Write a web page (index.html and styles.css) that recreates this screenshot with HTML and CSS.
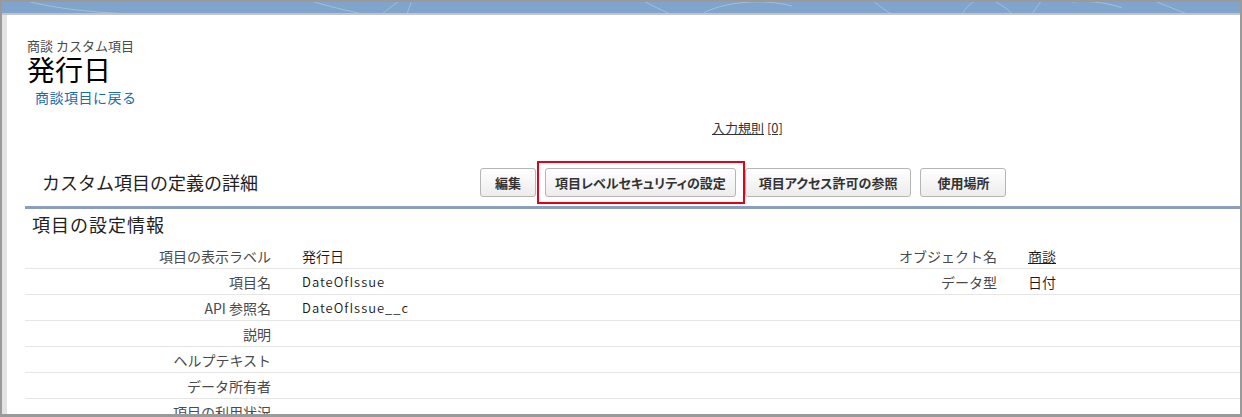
FILE: index.html
```html
<!DOCTYPE html>
<html lang="ja">

<head>
    <meta charset="UTF-8">
    <title>発行日 | 商談 カスタム項目</title>
    <link rel="stylesheet" href="styles.css">
</head>

<body>
    <div class="frame">
        <div class="banner">
            <svg class="banner-art" width="1238" height="11" viewBox="0 0 1238 11">
                <g fill="none" stroke="#ffffff" stroke-opacity="0.28" stroke-width="1">
                    <path d="M20 -2 C60 8 90 10 130 12" />
                    <path d="M300 -4 C330 6 345 8 360 12" />
                    <path d="M380 12 C390 4 395 0 400 -2" />
                    <path d="M405 12 L410 -2" />
                    <path d="M640 -2 C650 4 660 8 668 12" />
                    <path d="M700 12 C720 0 760 -4 790 4" />
                    <path d="M870 -2 C880 6 885 10 890 12" />
                    <path d="M960 12 C965 4 970 0 975 -2" />
                    <path d="M990 -2 C998 2 1005 6 1010 12" />
                    <path d="M1030 12 L1040 -2" />
                    <path d="M1070 0 C1090 -2 1110 2 1120 6" />
                    <path d="M1150 -2 C1165 4 1175 8 1185 12" />
                </g>
            </svg>
        </div>

        <div class="page">
            <div class="pt-header">
                <div class="pt-type">商談 カスタム項目</div>
                <h1 class="pt-title">発行日</h1>
                <a class="back-link" href="#">商談項目に戻る</a>
            </div>

            <div class="related-links">
                <a href="#">入力規則</a> <a href="#">[0]</a>
            </div>

            <div class="pb-header">
                <h2 class="pb-title">カスタム項目の定義の詳細</h2>
                <div class="pb-buttons">
                    <button class="btn btn-short">編集</button>
                    <span class="highlight">
                        <button class="btn">項目レベルセキュリティの設定</button>
                    </span>
                    <button class="btn btn-wide">項目アクセス許可の参照</button>
                    <button class="btn btn-short">使用場所</button>
                </div>
            </div>

            <h3 class="pb-sub">項目の設定情報</h3>

            <div class="detail-list">
                <div class="row">
                    <div class="label">項目の表示ラベル</div>
                    <div class="data">発行日</div>
                    <div class="label">オブジェクト名</div>
                    <div class="data"><a href="#">商談</a></div>
                </div>
                <div class="row">
                    <div class="label">項目名</div>
                    <div class="data latin">DateOfIssue</div>
                    <div class="label">データ型</div>
                    <div class="data">日付</div>
                </div>
                <div class="row">
                    <div class="label">API 参照名</div>
                    <div class="data latin">DateOfIssue__c</div>
                    <div class="label"></div>
                    <div class="data"></div>
                </div>
                <div class="row">
                    <div class="label">説明</div>
                    <div class="data"></div>
                    <div class="label"></div>
                    <div class="data"></div>
                </div>
                <div class="row">
                    <div class="label">ヘルプテキスト</div>
                    <div class="data"></div>
                    <div class="label"></div>
                    <div class="data"></div>
                </div>
                <div class="row">
                    <div class="label">データ所有者</div>
                    <div class="data"></div>
                    <div class="label"></div>
                    <div class="data"></div>
                </div>
                <div class="row">
                    <div class="label">項目の利用状況</div>
                    <div class="data"></div>
                    <div class="label"></div>
                    <div class="data"></div>
                </div>
            </div>
        </div>
    </div>
</body>

</html>
```

FILE: styles.css
```css
* {
    margin: 0;
    padding: 0;
    box-sizing: border-box;
}

body {
    width: 1242px;
    height: 417px;
    overflow: hidden;
    background: #ffffff;
    font-family: "Noto Sans CJK JP", "Noto Sans", sans-serif;
    color: #333333;
}

.frame {
    width: 1242px;
    height: 417px;
    border: 2px solid #9a9a9a;
    border-bottom-width: 3px;
    display: flex;
    flex-direction: column;
    overflow: hidden;
}

.banner {
    height: 13px;
    background-color: #80a4cc;
    border-bottom: 2px solid #c4c4c4;
    overflow: hidden;
}

.banner-art {
    display: block;
}

.page {
    flex: 1;
    border-left: 5px solid #e3e3e3;
    padding-left: 18px;
    overflow: hidden;
}

/* page title */
.pt-header {
    padding: 23px 0 0 2px;
}

.pt-type {
    font-size: 13px;
    line-height: 15px;
    color: #4a4a4a;
}

.pt-title {
    margin-top: 1px;
    font-size: 28px;
    line-height: 30px;
    font-weight: normal;
    color: #000000;
}

.back-link {
    display: inline-block;
    margin: 2px 0 0 8px;
    font-size: 14px;
    line-height: 18px;
    letter-spacing: 0.5px;
    color: #1c6bb0;
    text-decoration: none;
}

.related-links {
    margin-top: 12px;
    padding-left: 687px;
    font-size: 13px;
    line-height: 16px;
}

.related-links a {
    color: #333333;
}

/* block header */
.pb-header {
    margin-top: 22px;
    height: 51px;
    display: flex;
    align-items: center;
    border-bottom: 3px solid #8c9dbf;
}

.pb-title {
    width: 455px;
    padding-left: 17px;
    font-size: 18px;
    font-weight: normal;
    color: #222222;
}

.pb-buttons {
    display: flex;
    align-items: center;
    gap: 9px;
}

.btn {
    height: 29px;
    padding: 0 9px;
    border: 1px solid #b5b5b5;
    border-radius: 3px;
    background: linear-gradient(#ffffff, #ececec);
    font-family: "Noto Sans CJK JP", "Noto Sans", sans-serif;
    font-size: 13px;
    font-weight: bold;
    font-feature-settings: "palt";
    color: #333333;
    cursor: pointer;
}

.btn-wide {
    padding: 0 13px;
}

.btn-short {
    padding: 0 14px;
}

.btn-short:last-child {
    padding: 0 16px;
}

.highlight {
    position: relative;
    display: flex;
}

.highlight::after {
    content: "";
    position: absolute;
    top: -7px;
    bottom: -7px;
    left: -8px;
    right: -9px;
    border: 2px solid #e2001a;
}

.pb-sub {
    margin-top: 4px;
    padding-left: 7px;
    font-size: 18px;
    line-height: 22px;
    font-weight: normal;
    letter-spacing: 1px;
    color: #222222;
}

/* detail table */
.detail-list {
    margin-top: 8px;
}

.row {
    display: grid;
    grid-template-columns: 256px 460px 266px 1fr;
    height: 26px;
    border-bottom: 1px solid #e6e6e6;
    align-items: center;
}

.label {
    text-align: right;
    padding-right: 10px;
    font-size: 14px;
    color: #4a4a4a;
}

.data {
    padding-left: 21px;
    font-size: 14px;
    font-weight: 350;
    color: #1a1a1a;
}

.data a {
    color: #1a1a1a;
}

.latin {
    font-size: 13px;
    letter-spacing: 1px;
}
```
